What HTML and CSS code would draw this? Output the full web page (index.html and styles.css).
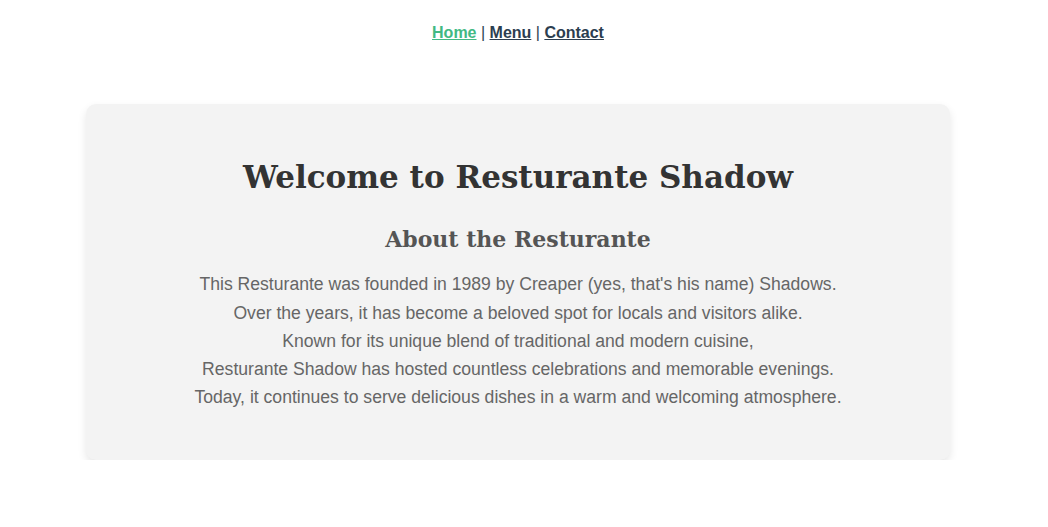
FILE: index.html
```html
<!DOCTYPE html>
<html lang="en">
<head>
<meta charset="utf-8">
<title>Resturante Shadow</title>
<link rel="stylesheet" href="styles.css">
</head>
<body>
<div class="app">
  <nav class="nav">
    <a href="#" class="nav-link active">Home</a> | <a href="#" class="nav-link">Menu</a> | <a href="#" class="nav-link">Contact</a>
  </nav>
  <main class="card">
    <h1 class="title">Welcome to Resturante Shadow</h1>
    <h2 class="subtitle">About the Resturante</h2>
    <p class="text">
      This Resturante was founded in 1989 by Creaper (yes, that's his name) Shadows.<br>
      Over the years, it has become a beloved spot for locals and visitors alike.<br>
      Known for its unique blend of traditional and modern cuisine,<br>
      Resturante Shadow has hosted countless celebrations and memorable evenings.<br>
      Today, it continues to serve delicious dishes in a warm and welcoming atmosphere.
    </p>
  </main>
</div>
</body>
</html>
```
FILE: styles.css
```css
html, body {
  margin: 0;
  padding: 0;
  background: #ffffff;
}
.app {
  width: 1036px;
  font-family: "Liberation Sans", Arial, sans-serif;
  color: #2c3e50;
  text-align: center;
}
.nav {
  padding: 24px 0 14px;
  font-size: 16px;
  line-height: 18.4px;
}
.nav-link {
  color: #2c3e50;
  font-weight: bold;
  text-decoration: underline;
}
.nav-link.active {
  color: #42b983;
}
.card {
  width: 800px;
  margin: 48px auto 0;
  padding: 40px 32px 49px;
  background: #f3f3f3;
  border-radius: 10px;
  box-shadow: 0 4px 8px rgba(0, 0, 0, 0.1);
}
.title {
  margin: 13px 0 27px;
  font-family: "DejaVu Serif", Georgia, serif;
  font-size: 31px;
  line-height: 40px;
  font-weight: bold;
  color: #333333;
}
.subtitle {
  margin: 0 0 16px;
  font-family: "DejaVu Serif", Georgia, serif;
  font-size: 22px;
  line-height: 30px;
  font-weight: bold;
  color: #555555;
}
.text {
  margin: 0;
  font-size: 17.6px;
  line-height: 28.16px;
  color: #666666;
}
```
